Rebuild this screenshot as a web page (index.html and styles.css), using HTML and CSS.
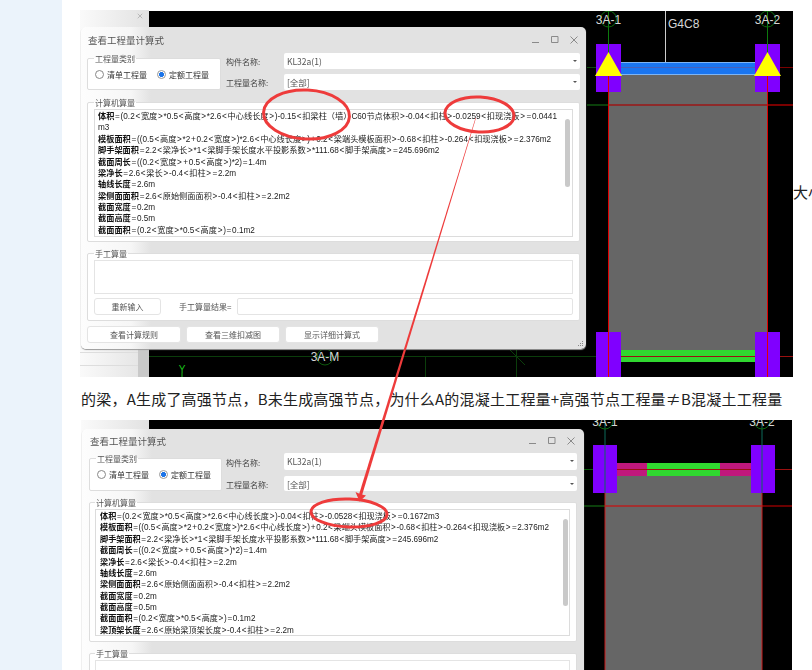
FILE: index.html
```html
<!DOCTYPE html>
<html lang="zh-CN">
<head>
<meta charset="utf-8">
<title>查看工程量计算式</title>
<link rel="stylesheet" href="styles.css">
</head>
<body>
<div class="page">
  <aside class="sidebar"></aside>
  <main class="article">
    <section class="shot shot-a">
      <div class="strip">
        <svg class="strip-x" viewBox="0 0 8 8" width="6" height="6"><path d="M1 1L7 7M7 1L1 7"/></svg>
        <div class="strip-foot"></div>
      </div>
      <svg class="cad" width="644" height="366" viewBox="149 11 644 366">
        <rect x="608" y="75" width="159" height="275" fill="#666"/>
        <rect x="621" y="62" width="134" height="13" fill="#1a75f0"/>
        <path d="M621 62.5H755M621 74.5H755" stroke="#7db4f5" fill="none"/>
        <path d="M665.5 11V62" stroke="#ccc" fill="none"/>
        <path d="M587 67.5H608" stroke="#0a4a0a" fill="none"/>
        <path d="M621 67.5H755" stroke="#4a5fb8" fill="none"/>
        <path d="M780 67.5H793" stroke="#7a0000" fill="none"/>
        <path d="M608 105H767" stroke="#8e2a2a" stroke-width="2" fill="none"/>
        <path d="M587 105H608" stroke="#0a3f0a" stroke-width="2" fill="none"/>
        <path d="M767 105H793" stroke="#7a0000" stroke-width="2" fill="none"/>
        <rect x="621" y="350" width="134" height="12" fill="#30d830"/>
        <path d="M149 356.5H608" stroke="#0b3d0b" fill="none"/>
        <path d="M608 356.5H793" stroke="#9a1010" fill="none"/>
        <path d="M510 350L525 365M516.5 350V377M425.5 356V377" stroke="#0b3d0b" fill="none"/>
        <rect x="596" y="44" width="25" height="48" fill="#8000ff"/>
        <rect x="755" y="44" width="25" height="48" fill="#8000ff"/>
        <rect x="596" y="332" width="25" height="45" fill="#8000ff"/>
        <rect x="755" y="332" width="25" height="45" fill="#8000ff"/>
        <path d="M608.5 75V377M767.5 75V377" stroke="#e00000" fill="none"/>
        <path d="M608.5 11V54M767.5 11V54" stroke="#0d7a0d" fill="none"/>
        <circle cx="608.5" cy="19" r="8" stroke="#0d6a0d" fill="none"/>
        <circle cx="767.5" cy="19" r="8" stroke="#0d6a0d" fill="none"/>
        <circle cx="325" cy="357" r="8" stroke="#0d5a0d" fill="none"/>
        <path d="M595 76L608.5 52L622 76Z M754 76L767.5 52L781 76Z" fill="#ffff00"/>
        <path d="M182 373V377" stroke="#19c219" fill="none"/>
        <text x="608.5" y="24" class="cad-label" text-anchor="middle">3A-1</text>
        <text x="767.5" y="24" class="cad-label" text-anchor="middle">3A-2</text>
        <text x="668" y="28" class="cad-label">G4C8</text>
        <text x="325" y="361" class="cad-label" text-anchor="middle">3A-M</text>
        <text x="182" y="373" class="cad-y" text-anchor="middle">Y</text>
      </svg>
      <div class="dialog dialog-a">
        <header class="titlebar">
          <span>查看工程量计算式</span>
          <svg class="winctl" width="46" height="8" viewBox="0 0 46 8"><path d="M0 6.5H7M19.5 .5H26V6.5H19.5ZM38.5 .5L45.5 7.5M45.5 .5L38.5 7.5"/></svg>
        </header>
        <div class="toprow">
          <div class="group group-kind">
            <span class="legend">工程量类别</span>
            <div class="radios">
              <span class="radio"><i class="dot"></i>清单工程量</span>
              <span class="radio"><i class="dot on"></i>定额工程量</span>
            </div>
          </div>
          <div class="fields">
            <label>构件名称:</label><div class="combo">KL32a(1)<i class="caret"></i></div>
            <label>工程量名称:</label><div class="combo">[全部]<i class="caret"></i></div>
          </div>
        </div>
        <div class="group group-calc">
          <span class="legend">计算机算量</span>
          <div class="calcbox">
            <div><b>体积</b><i>=</i>(0.2<i>&lt;</i>宽度<i>&gt;</i>*0.5<i>&lt;</i>高度<i>&gt;</i>*2.6<i>&lt;</i>中心线长度<i>&gt;</i>)-0.15<i>&lt;</i>扣梁柱（墙）C60节点体积<i>&gt;</i>-0.04<i>&lt;</i>扣柱<i>&gt;</i>-0.0259<i>&lt;</i>扣现浇板<i>&gt;</i><i>=</i>0.0441</div>
            <div>m3</div>
            <div><b>模板面积</b><i>=</i>((0.5<i>&lt;</i>高度<i>&gt;</i>*2<i>+</i>0.2<i>&lt;</i>宽度<i>&gt;</i>)*2.6<i>&lt;</i>中心线长度<i>&gt;</i>)<i>+</i>0.2<i>&lt;</i>梁端头模板面积<i>&gt;</i>-0.68<i>&lt;</i>扣柱<i>&gt;</i>-0.264<i>&lt;</i>扣现浇板<i>&gt;</i><i>=</i>2.376m2</div>
            <div><b>脚手架面积</b><i>=</i>2.2<i>&lt;</i>梁净长<i>&gt;</i>*1<i>&lt;</i>梁脚手架长度水平投影系数<i>&gt;</i>*111.68<i>&lt;</i>脚手架高度<i>&gt;</i><i>=</i>245.696m2</div>
            <div><b>截面周长</b><i>=</i>((0.2<i>&lt;</i>宽度<i>&gt;</i><i>+</i>0.5<i>&lt;</i>高度<i>&gt;</i>)*2)<i>=</i>1.4m</div>
            <div><b>梁净长</b><i>=</i>2.6<i>&lt;</i>梁长<i>&gt;</i>-0.4<i>&lt;</i>扣柱<i>&gt;</i><i>=</i>2.2m</div>
            <div><b>轴线长度</b><i>=</i>2.6m</div>
            <div><b>梁侧面面积</b><i>=</i>2.6<i>&lt;</i>原始侧面面积<i>&gt;</i>-0.4<i>&lt;</i>扣柱<i>&gt;</i><i>=</i>2.2m2</div>
            <div><b>截面宽度</b><i>=</i>0.2m</div>
            <div><b>截面高度</b><i>=</i>0.5m</div>
            <div><b>截面面积</b><i>=</i>(0.2<i>&lt;</i>宽度<i>&gt;</i>*0.5<i>&lt;</i>高度<i>&gt;</i>)<i>=</i>0.1m2</div>
            <span class="scroll"></span>
          </div>
        </div>
        <div class="group group-manual">
          <span class="legend">手工算量</span>
          <div class="manualbox"></div>
          <div class="manualrow">
            <span class="btn btn-reset">重新输入</span>
            <span class="result-label">手工算量结果=</span>
            <span class="result-input"></span>
          </div>
        </div>
        <div class="actions">
          <span class="btn">查看计算规则</span>
          <span class="btn">查看三维扣减图</span>
          <span class="btn">显示详细计算式</span>
        </div>
        <svg class="grip" width="6" height="6" viewBox="0 0 6 6"><path d="M4 0h1v1H4zM2 2h1v1H2zM4 2h1v1H4zM0 4h1v1H0zM2 4h1v1H2zM4 4h1v1H4z"/></svg>
      </div>
    </section>
    <span class="bleed">大小</span>
    <p class="caption">的梁，A生成了高强节点，B未生成高强节点，为什么A的混凝土工程量+高强节点工程量≠B混凝土工程量</p>
    <section class="shot shot-b">
      <div class="strip"></div>
      <svg class="cad" width="643" height="250" viewBox="150 420 643 250">
        <rect x="606" y="476" width="157" height="194" fill="#666"/>
        <rect x="618" y="463" width="30" height="13" fill="#c0187c"/>
        <rect x="648" y="463" width="73" height="13" fill="#30d830"/>
        <rect x="721" y="463" width="31" height="13" fill="#c0187c"/>
        <path d="M606 469.5H793" stroke="#9a1010" fill="none"/>
        <path d="M584 469.5H606" stroke="#0b5a0b" fill="none"/>
        <path d="M584 506H606" stroke="#0b3f0b" stroke-width="2" fill="none"/>
        <path d="M606 506H763" stroke="#a33030" stroke-width="2" fill="none"/>
        <path d="M763 506H793" stroke="#6a0000" stroke-width="2" fill="none"/>
        <rect x="594" y="445" width="24" height="48" fill="#8000ff"/>
        <rect x="752" y="445" width="24" height="48" fill="#8000ff"/>
        <path d="M606 493V670M763 493V670" stroke="#c81a1a" fill="none"/>
        <path d="M606 420V493M763 420V493" stroke="#0d6a5a" fill="none"/>
        <circle cx="606" cy="421" r="8" stroke="#0d6a0d" fill="none"/>
        <circle cx="763" cy="421" r="8" stroke="#0d6a0d" fill="none"/>
        <text x="606" y="426" class="cad-label" text-anchor="middle">3A-1</text>
        <text x="763" y="426" class="cad-label" text-anchor="middle">3A-2</text>
      </svg>
      <div class="dialog dialog-b">
        <header class="titlebar">
          <span>查看工程量计算式</span>
          <svg class="winctl" width="46" height="8" viewBox="0 0 46 8"><path d="M0 6.5H7M19.5 .5H26V6.5H19.5ZM38.5 .5L45.5 7.5M45.5 .5L38.5 7.5"/></svg>
        </header>
        <div class="toprow">
          <div class="group group-kind">
            <span class="legend">工程量类别</span>
            <div class="radios">
              <span class="radio"><i class="dot"></i>清单工程量</span>
              <span class="radio"><i class="dot on"></i>定额工程量</span>
            </div>
          </div>
          <div class="fields">
            <label>构件名称:</label><div class="combo">KL32a(1)<i class="caret"></i></div>
            <label>工程量名称:</label><div class="combo">[全部]<i class="caret"></i></div>
          </div>
        </div>
        <div class="group group-calc">
          <span class="legend">计算机算量</span>
          <div class="calcbox">
            <div><b>体积</b><i>=</i>(0.2<i>&lt;</i>宽度<i>&gt;</i>*0.5<i>&lt;</i>高度<i>&gt;</i>*2.6<i>&lt;</i>中心线长度<i>&gt;</i>)-0.04<i>&lt;</i>扣柱<i>&gt;</i>-0.0528<i>&lt;</i>扣现浇板<i>&gt;</i><i>=</i>0.1672m3</div>
            <div><b>模板面积</b><i>=</i>((0.5<i>&lt;</i>高度<i>&gt;</i>*2<i>+</i>0.2<i>&lt;</i>宽度<i>&gt;</i>)*2.6<i>&lt;</i>中心线长度<i>&gt;</i>)<i>+</i>0.2<i>&lt;</i>梁端头模板面积<i>&gt;</i>-0.68<i>&lt;</i>扣柱<i>&gt;</i>-0.264<i>&lt;</i>扣现浇板<i>&gt;</i><i>=</i>2.376m2</div>
            <div><b>脚手架面积</b><i>=</i>2.2<i>&lt;</i>梁净长<i>&gt;</i>*1<i>&lt;</i>梁脚手架长度水平投影系数<i>&gt;</i>*111.68<i>&lt;</i>脚手架高度<i>&gt;</i><i>=</i>245.696m2</div>
            <div><b>截面周长</b><i>=</i>((0.2<i>&lt;</i>宽度<i>&gt;</i><i>+</i>0.5<i>&lt;</i>高度<i>&gt;</i>)*2)<i>=</i>1.4m</div>
            <div><b>梁净长</b><i>=</i>2.6<i>&lt;</i>梁长<i>&gt;</i>-0.4<i>&lt;</i>扣柱<i>&gt;</i><i>=</i>2.2m</div>
            <div><b>轴线长度</b><i>=</i>2.6m</div>
            <div><b>梁侧面面积</b><i>=</i>2.6<i>&lt;</i>原始侧面面积<i>&gt;</i>-0.4<i>&lt;</i>扣柱<i>&gt;</i><i>=</i>2.2m2</div>
            <div><b>截面宽度</b><i>=</i>0.2m</div>
            <div><b>截面高度</b><i>=</i>0.5m</div>
            <div><b>截面面积</b><i>=</i>(0.2<i>&lt;</i>宽度<i>&gt;</i>*0.5<i>&lt;</i>高度<i>&gt;</i>)<i>=</i>0.1m2</div>
            <div><b>梁顶架长度</b><i>=</i>2.6<i>&lt;</i>原始梁顶架长度<i>&gt;</i>-0.4<i>&lt;</i>扣柱<i>&gt;</i><i>=</i>2.2m</div>
            <span class="scroll"></span>
          </div>
        </div>
        <div class="group group-manual">
          <span class="legend">手工算量</span>
          <div class="manualbox"></div>
        </div>
      </div>
    </section>
    <svg class="markup" width="812" height="670" viewBox="0 0 812 670">
      <ellipse cx="306.5" cy="114.5" rx="43" ry="24.5" transform="rotate(3 306.5 114.5)"/>
      <ellipse cx="479.5" cy="114.5" rx="34.5" ry="17.5" transform="rotate(3 479.5 114.5)"/>
      <ellipse cx="349" cy="513" rx="38" ry="14" transform="rotate(2 349 513)"/>
      <path class="shaft" d="M475.5 118L476 118L361.5 497L358.5 496Z"/>
      <path class="shaft" d="M359.5 501.5L355.5 492L360 494L366 495.5Z"/>
    </svg>
  </main>
</div>
</body>
</html>
```
FILE: styles.css
```css
* { box-sizing: border-box; }
html, body { margin: 0; height: 670px; overflow: hidden; background: #fff; }
body { font-family: "Noto Sans CJK SC", "Liberation Sans", sans-serif; color: #222; }
.page { display: flex; width: 812px; height: 670px; overflow: hidden; }
.sidebar { width: 62px; flex: none; background: #ebf3fb; }
.article { position: relative; flex: 1; padding: 10px 0 0 18px; overflow: hidden; }

.shot { position: relative; display: flex; width: 713px; overflow: visible; }
.shot-a { height: 367px; }
.shot-b { height: 250px; margin-left: 1px; width: 712px; }
.strip { position: relative; flex: none; width: 69px; background: linear-gradient(90deg, #fafafa, #e2e2e2); }
.shot-b .strip { width: 68px; }
.strip-x { position: absolute; left: 57px; top: 3px; }
.strip-x path { stroke: #aaa; fill: none; }
.strip-foot { position: absolute; left: 0; right: 0; bottom: 0; height: 28px; border-right: 11px solid #c9c9c9; background: linear-gradient(180deg, transparent 3px, #ddd 3px, #ddd 4px, transparent 4px, transparent 16px, #ddd 16px, #ddd 17px, transparent 17px); }
.cad { display: block; flex: none; background: #000; margin-top: 1px; }
.shot-b .cad { margin-top: 0; }
.cad-label { font: 12px "Liberation Sans", sans-serif; fill: #d6d6d6; }
.cad-y { font: 10px "Liberation Sans", sans-serif; fill: #19c219; }

.dialog { position: absolute; padding: 0 6px; border-radius: 5px 5px 0 0; background: linear-gradient(90deg, #fdfdfd 0, #f6f6f6 50px, #e2e2e2 70px); font-size: 8px; line-height: 11px; color: #444; box-shadow: 0 1px 1px #999; filter: blur(0.25px); }
.dialog-a { left: 1px; top: 17px; width: 505px; height: 322px; border-radius: 5px; }
.dialog-b { left: 1px; top: 9px; width: 502px; height: 300px; padding: 0 7px; }

.titlebar { display: flex; align-items: center; justify-content: space-between; height: 26px; padding: 0 2px 0 1px; font-size: 9.5px; color: #555; }
.dialog-b .titlebar { height: 24px; }
.winctl path { fill: none; stroke: #8a8a8a; }

.toprow { display: flex; gap: 5px; }
.dialog-b .toprow { gap: 4px; }
.group { position: relative; background: #fff; border: 1px solid #ddd; border-radius: 2px; }
.legend { display: block; width: fit-content; height: 11px; margin: -6px 0 0 6px; padding: 0 1px; background: linear-gradient(180deg, transparent 5px, #fff 5px); color: #555; }
.group-calc .legend, .group-manual .legend { margin-left: 0; }
.group-kind { flex: none; width: 134px; height: 32px; margin-top: 5px; }
.dialog-b .group-kind { width: 133px; height: 33px; }
.radios { display: flex; gap: 10px; padding: 5px 0 0 7px; }
.radio { display: flex; align-items: center; gap: 3px; color: #333; }
.dot { display: block; width: 9px; height: 9px; border: 1px solid #888; border-radius: 50%; background: #fff; }
.dot.on { border-color: #999; background: radial-gradient(circle, #1a73e8 0 2.2px, #fff 2.8px); }

.fields { display: grid; grid-template-columns: 58px 296px; grid-template-rows: 16px 16px; row-gap: 5px; align-items: center; }
.dialog-b .fields { grid-template-columns: 58px 293px; grid-template-rows: 17px 15px; row-gap: 6px; }
.fields label { color: #444; padding-top: 1px; }
.combo { position: relative; height: 100%; padding: 2px 3px; background: #fff; border-radius: 2px; font-size: 8.5px; line-height: 12px; color: #555; }
.caret { position: absolute; right: 3px; top: 7px; border: 2px solid transparent; border-top: 2px solid #555; }

.group-calc { height: 140px; margin-top: 12px; padding: 0 6px; }
.dialog-b .group-calc { margin-top: 11px; padding: 0 6px 0 5px; }
.calcbox { position: relative; height: 128px; margin-top: 1px; padding: 1px 3px; border: 1px solid #dcdcdc; background: #fff; font-family: "Liberation Sans", "Noto Sans CJK SC", sans-serif; font-size: 8.2px; line-height: 11.37px; color: #222; white-space: nowrap; overflow: hidden; }
.dialog-b .calcbox { height: 127px; padding-left: 4px; font-size: 8.15px; }
.calcbox b { font-weight: 700; color: #111; }
.calcbox i { display: inline-block; width: 6.2px; text-align: center; font-style: normal; }
.dialog-b .calcbox i { width: 6.1px; }
.scroll { position: absolute; right: 2px; top: 9px; width: 5px; height: 68px; border-radius: 3px; background: #c9c9c9; }
.dialog-b .scroll { right: 1px; top: 9px; height: 87px; }

.group-manual { height: 68px; margin-top: 11px; padding: 0 6px; }
.dialog-b .group-manual { padding: 0 6px 0 5px; }
.manualbox { height: 34px; margin-top: 1px; border: 1px solid #e4e4e4; background: #fff; }
.manualrow { display: flex; align-items: center; margin-top: 4px; }
.btn { display: flex; align-items: center; justify-content: center; height: 17px; width: 94px; background: #fff; border: 1px solid #e4e4e4; border-radius: 3px; color: #555; }
.btn-reset { width: 67px; }
.result-label { width: 76px; padding-left: 18px; color: #555; white-space: nowrap; }
.result-input { flex: 1; height: 17px; border: 1px solid #e4e4e4; border-radius: 2px; }
.actions { display: flex; gap: 5px; margin-top: 5px; }
.grip { position: absolute; right: 2px; bottom: 2px; }
.grip path { fill: #888; }

.bleed { position: absolute; left: 731px; top: 183px; font-size: 15px; line-height: 18px; white-space: nowrap; color: #222; }
.caption { height: 43px; margin: 0 0 0 1px; font-size: 15px; line-height: 43px; letter-spacing: 0.21px; color: #222; white-space: nowrap; }

.markup { position: absolute; left: 0; top: 0; margin-left: -62px; pointer-events: none; }
.markup ellipse { fill: none; stroke: #ee3b3b; stroke-width: 3; }
.markup .shaft { fill: #ee3b3b; }
```
